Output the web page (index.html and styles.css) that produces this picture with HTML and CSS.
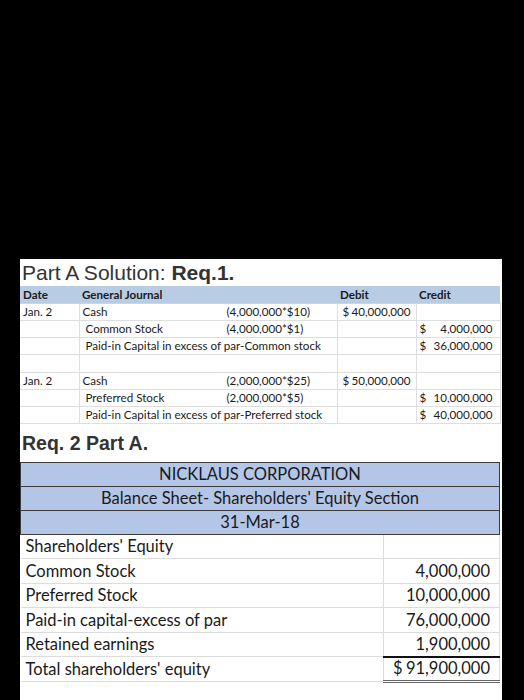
FILE: index.html
```html
<!DOCTYPE html>
<html>
<head>
<meta charset="utf-8">
<link rel="stylesheet" href="styles.css">
</head>
<body>
<div class="screen">
  <div class="sheet">
    <h1 class="title">Part A Solution: <b>Req.1.</b></h1>
    <table class="journal">
      <colgroup><col class="c-date"><col class="c-gj"><col class="c-debit"><col class="c-credit"></colgroup>
      <thead>
        <tr><th>Date</th><th>General Journal</th><th class="th-debit">Debit</th><th class="th-credit">Credit</th></tr>
      </thead>
      <tbody>
        <tr>
          <td>Jan. 2</td>
          <td><div class="entry"><span class="acct">Cash</span><span class="calc">(4,000,000*$10)</span></div></td>
          <td class="debit"><div class="acc"><span>$</span><span>40,000,000</span></div></td>
          <td class="credit"></td>
        </tr>
        <tr>
          <td></td>
          <td><div class="entry"><span class="acct ind">Common Stock</span><span class="calc">(4,000,000*$1)</span></div></td>
          <td class="debit"></td>
          <td class="credit"><div class="acc"><span>$</span><span>4,000,000</span></div></td>
        </tr>
        <tr>
          <td></td>
          <td><div class="entry"><span class="ind">Paid-in Capital in excess of par-Common stock</span></div></td>
          <td class="debit"></td>
          <td class="credit"><div class="acc"><span>$</span><span>36,000,000</span></div></td>
        </tr>
        <tr class="blank"><td></td><td></td><td></td><td></td></tr>
        <tr>
          <td>Jan. 2</td>
          <td><div class="entry"><span class="acct">Cash</span><span class="calc">(2,000,000*$25)</span></div></td>
          <td class="debit"><div class="acc"><span>$</span><span>50,000,000</span></div></td>
          <td class="credit"></td>
        </tr>
        <tr>
          <td></td>
          <td><div class="entry"><span class="acct ind">Preferred Stock</span><span class="calc">(2,000,000*$5)</span></div></td>
          <td class="debit"></td>
          <td class="credit"><div class="acc"><span>$</span><span>10,000,000</span></div></td>
        </tr>
        <tr>
          <td></td>
          <td><div class="entry"><span class="ind">Paid-in Capital in excess of par-Preferred stock</span></div></td>
          <td class="debit"></td>
          <td class="credit"><div class="acc"><span>$</span><span>40,000,000</span></div></td>
        </tr>
      </tbody>
    </table>
    <h2 class="title2">Req. 2 Part A.</h2>
    <table class="bs">
      <colgroup><col class="c-label"><col class="c-amt"></colgroup>
      <tbody>
        <tr class="band"><td colspan="2">NICKLAUS CORPORATION</td></tr>
        <tr class="band"><td colspan="2">Balance Sheet- Shareholders' Equity Section</td></tr>
        <tr class="band"><td colspan="2">31-Mar-18</td></tr>
        <tr><td class="lbl">Shareholders' Equity</td><td class="amt"></td></tr>
        <tr><td class="lbl">Common Stock</td><td class="amt">4,000,000</td></tr>
        <tr><td class="lbl">Preferred Stock</td><td class="amt">10,000,000</td></tr>
        <tr><td class="lbl">Paid-in capital-excess of par</td><td class="amt">76,000,000</td></tr>
        <tr><td class="lbl">Retained earnings</td><td class="amt">1,900,000</td></tr>
        <tr><td class="lbl">Total shareholders' equity</td><td class="amt total"><div class="acc"><span>$</span><span>91,900,000</span></div></td></tr>
      </tbody>
    </table>
  </div>
</div>
</body>
</html>
```

FILE: styles.css
```css
* { box-sizing: border-box; }

body {
  margin: 0;
  background: #000;
}

.screen {
  width: 524px;
  height: 700px;
  overflow: hidden;
  padding: 259px 0 0 20px;
  background: #000;
}

.sheet {
  width: 482px;
  height: 441px;
  background: #fff;
  color: #1e1e1e;
}

.title {
  margin: 0;
  height: 27px;
  padding: 1px 0 0 2px;
  font: 400 21px/26px "Liberation Sans", Arial, sans-serif;
  color: #333;
  white-space: nowrap;
}

.title b { font-weight: 700; }

/* Journal table */
.journal {
  width: 480px;
  border-collapse: collapse;
  table-layout: fixed;
  font-family: Lato, "Open Sans", sans-serif;
  font-size: 11.6px;
  color: #1a1a1a;
}

.c-date { width: 59px; }
.c-gj { width: 258px; }
.c-debit { width: 79px; }
.c-credit { width: 84px; }

.journal th {
  background: #b8cce4;
  height: 17px;
  padding: 0 3px 1px;
  text-align: left;
  font-weight: 700;
  vertical-align: bottom;
  line-height: 14px;
  border-bottom: 1px solid #c9d6e8;
}

.journal td {
  height: 17px;
  padding: 0 3px 1px;
  line-height: 14px;
  vertical-align: bottom;
  border-bottom: 1px solid #dedede;
  border-right: 1px solid #dedede;
  white-space: nowrap;
}

.journal tr.blank td { height: 18px; }

.entry {
  display: flex;
}

.acct {
  flex: none;
  width: 144px;
}

.ind { padding-left: 3px; }

.acc {
  display: flex;
  justify-content: space-between;
}

.journal td.debit { padding: 0 5px 1px 5px; }
.journal td.credit { padding: 0 7px 1px 3px; }

/* Heading 2 */
.title2 {
  margin: 0;
  height: 38px;
  padding: 5px 0 0 2px;
  font: 700 19.5px/28px "Liberation Sans", Arial, sans-serif;
  color: #333;
}

/* Balance sheet */
.bs {
  width: 479px;
  border-collapse: collapse;
  table-layout: fixed;
  font-family: Lato, "Open Sans", sans-serif;
  font-size: 16.5px;
  color: #1a1a1a;
}

.c-label { width: 363px; }
.c-amt { width: 116px; }

.bs tr.band td {
  background: #b4c6e7;
  border: 1.5px solid #3c3c3c;
  text-align: center;
  height: 24px;
  line-height: 19px;
  padding: 0 0 2px;
  vertical-align: bottom;
}

.bs td {
  height: 24.5px;
  line-height: 20px;
  padding: 0 0 2px;
  vertical-align: bottom;
  border-bottom: 1px solid #dcdcdc;
  white-space: nowrap;
}

.bs td.lbl {
  padding-left: 5px;
  border-right: 1px solid #dcdcdc;
}

.bs td.amt {
  text-align: right;
  padding-right: 9px;
  border-right: 1px solid #dcdcdc;
}

.bs td.total {
  text-align: left;
  border-top: 2px solid #111;
  border-bottom: 3px double #666;
  padding-left: 9px;
}
```
